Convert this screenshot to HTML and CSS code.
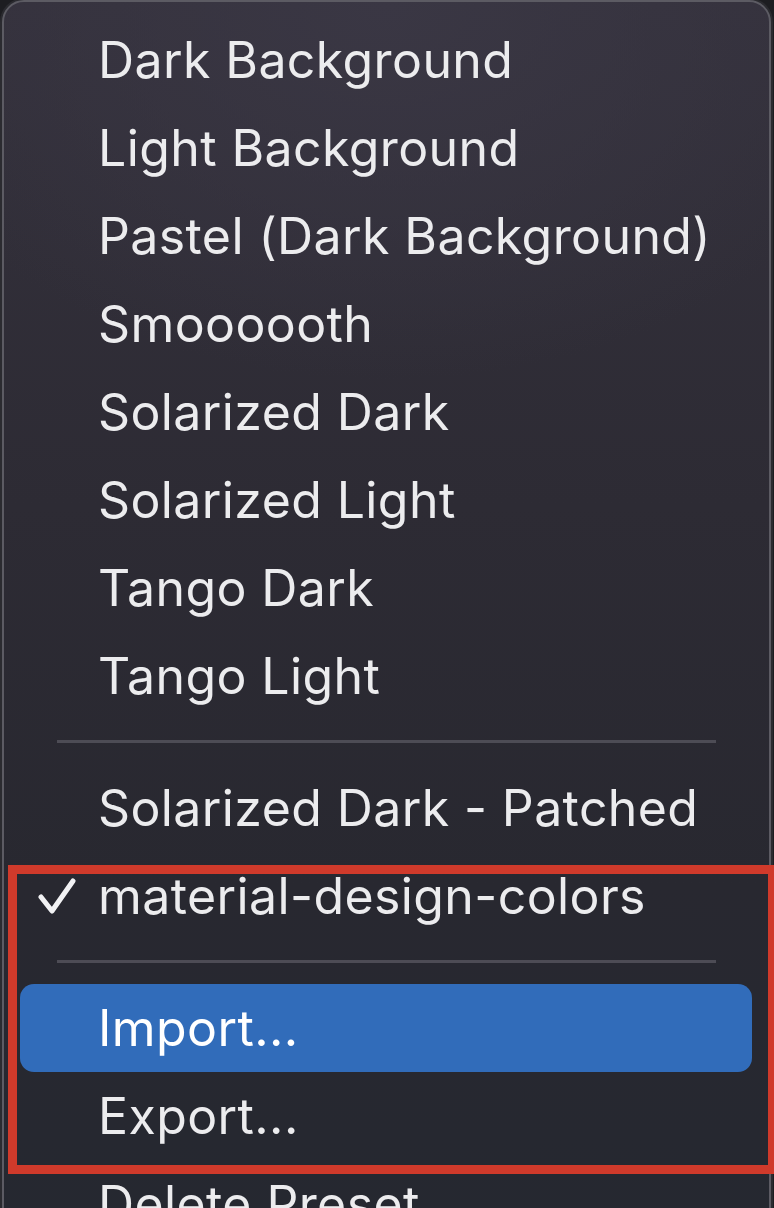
FILE: index.html
```html
<!DOCTYPE html>
<html lang="en">
<head>
  <meta charset="UTF-8">
  <title>Presets menu</title>
  <link rel="stylesheet" href="styles.css">
</head>
<body>

  <div class="menu">
    <ul class="menu-list">
      <li class="item"><span class="mark"></span>Dark Background</li>
      <li class="item"><span class="mark"></span>Light Background</li>
      <li class="item"><span class="mark"></span>Pastel (Dark Background)</li>
      <li class="item"><span class="mark"></span>Smoooooth</li>
      <li class="item"><span class="mark"></span>Solarized Dark</li>
      <li class="item"><span class="mark"></span>Solarized Light</li>
      <li class="item"><span class="mark"></span>Tango Dark</li>
      <li class="item"><span class="mark"></span>Tango Light</li>
      <li class="sep"></li>
      <li class="item"><span class="mark"></span>Solarized Dark - Patched</li>
      <li class="item">
        <span class="mark">
          <svg class="check" viewBox="0 0 38 36" width="38" height="36">
            <path d="M3 19 L14 33 L35 3" fill="none" stroke="#f2f2f4" stroke-width="5" stroke-linecap="round" stroke-linejoin="round"/>
          </svg>
        </span>material-design-colors
      </li>
      <li class="sep"></li>
      <li class="item active"><span class="mark"></span>Import...</li>
      <li class="item"><span class="mark"></span>Export...</li>
      <li class="item"><span class="mark"></span>Delete Preset</li>
    </ul>

    <!-- annotation box drawn over the last entries -->
    <div class="callout"></div>
  </div>

</body>
</html>
```

FILE: styles.css
```css
html, body { margin: 0; padding: 0; }
body { background: #1d1d21; height: 1208px; overflow: hidden; font-family: Inter, "Open Sans", sans-serif; }

.menu { position: relative; margin-left: 2px; width: 765px; height: 1260px; border: 2px solid #5c5b63; border-radius: 22px 22px 0 0; box-shadow: 0 0 0 2px #2b2b30; background: radial-gradient(ellipse 70% 30% at 50% 0%, #3a3744 0%, rgba(58,55,68,0) 100%), linear-gradient(to bottom, #34313c 0%, #2d2b34 40%, #282830 70%, #252830 100%); }

.menu-list { list-style: none; margin: 0; padding: 14px 0 0; }

.item { display: flex; align-items: center; height: 88px; margin: 0 17px 0 16px; padding-left: 18px; border-radius: 14px; color: #ececee; font-size: 50px; letter-spacing: 0.4px; white-space: nowrap; }
.item.active { background: #316cba; color: #fff; }

.mark { width: 60px; flex-shrink: 0; display: flex; align-items: center; }
.check { display: block; }

.sep { height: 3px; margin: 20px 53px 21px; background: #4d4c55; }

.callout { position: absolute; left: 4px; top: 863px; width: 751px; height: 291px; border: 9px solid #d03a2b; }
```
